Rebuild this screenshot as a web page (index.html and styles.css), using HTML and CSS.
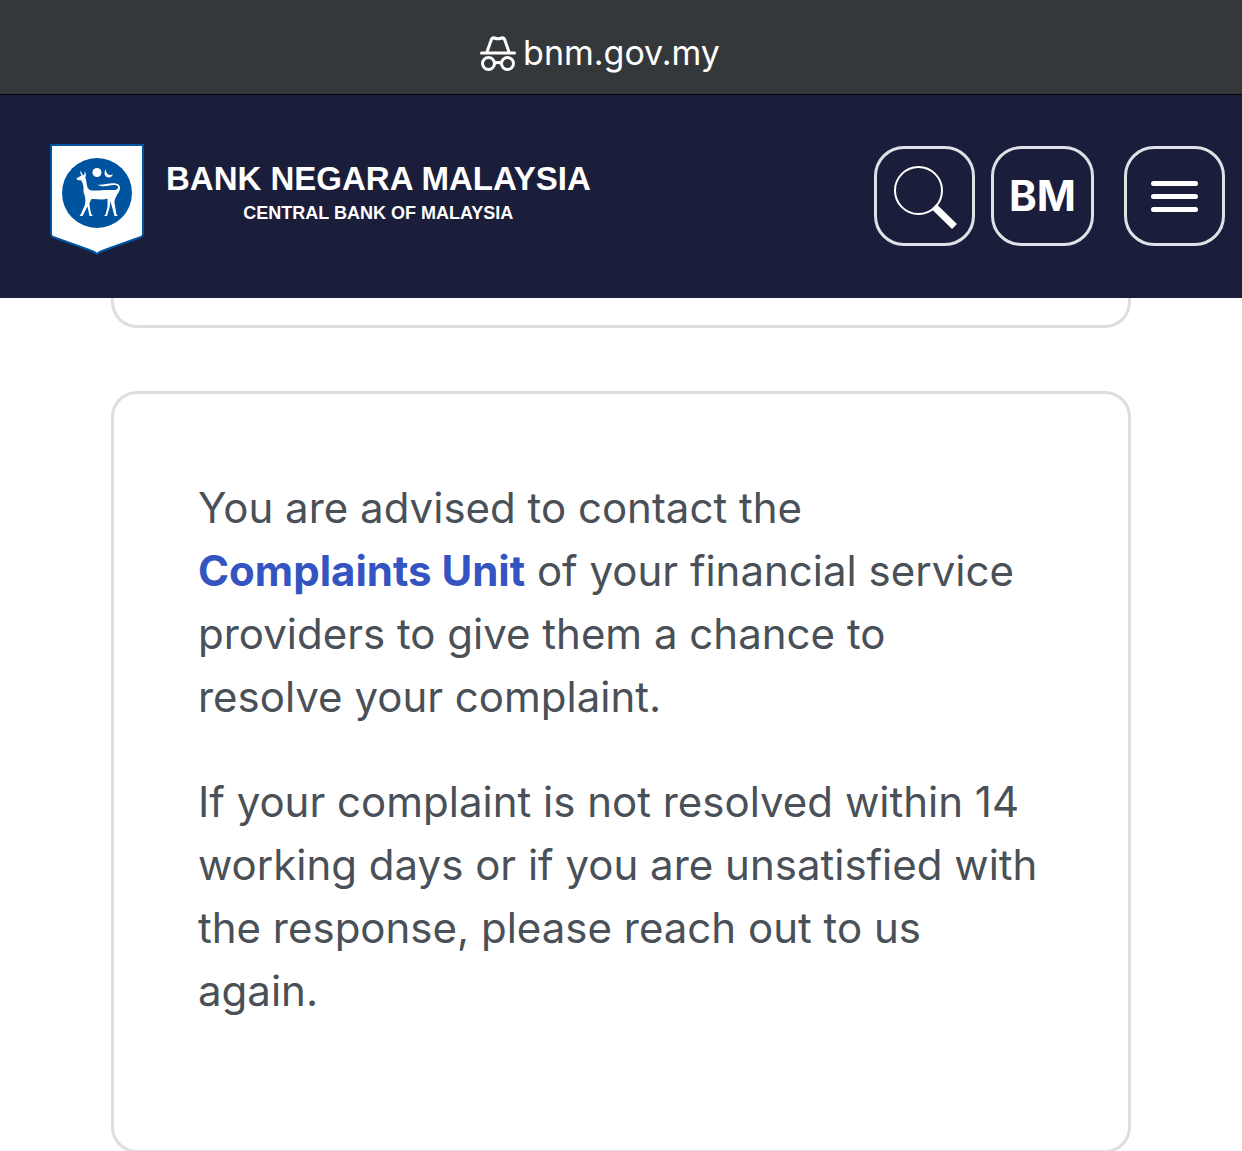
FILE: index.html
```html
<!DOCTYPE html>
<html lang="en">
<head>
  <meta charset="UTF-8">
  <meta name="viewport" content="width=device-width, initial-scale=1.0">
  <title>Bank Negara Malaysia</title>
  <link rel="stylesheet" href="styles.css">
</head>
<body>
  <div class="address-bar">
    <svg class="incognito" viewBox="0 0 36 36" aria-hidden="true">
      <path d="M7 17 11 5.500Q12 2.300 14.500 3Q18 4.500 21.500 3Q24 2.300 25 5.500L29 17M1.500 18H34.500" stroke-linecap="round"/>
      <circle cx="8.500" cy="28.500" r="6"/>
      <circle cx="27.500" cy="28.500" r="6"/>
      <path d="M14.500 28.500Q18 26.500 21.500 28.500"/>
    </svg>
    <span>bnm.gov.my</span>
  </div>

  <header class="header">
    <a href="#" class="brand">
      <svg class="crest" viewBox="0 0 96 114" aria-hidden="true">
        <path class="shield" d="M2 2H94V91Q94 93 92 94L57 106.500Q51 108.500 48 111Q45 108.500 39 106.500L4 94Q2 93 2 91Z"/>
        <circle class="disc" cx="48" cy="50" r="35"/>
        <circle class="white" cx="48" cy="29.500" r="4.500"/>
        <path class="white" d="M57 26C54 30 56 34.800 60 34.500C62 34.500 63.500 33 63.800 31.300C60.500 33.300 56.500 31 57 26Z"/>
        <path class="white" d="M32.500 32.500C31 30.500 31.200 29 31.700 27.500C32.500 30 33.500 31.500 34.500 32.500C35.500 31 36 30 35.500 28C37.500 30.500 37 32.500 36.300 34.500C37.500 37.500 37.500 41 38.500 44.500Q39.500 47 43 47.500C50 48 56 46.500 63 47Q68 47.500 69 45C69.500 42.500 67.500 41.700 64.500 42C59 42.700 54 44.500 48.500 41.700C54 42.300 58 40.500 64 40.300C69 40.200 71.500 42.500 71 45.500Q70.500 49 68.500 51C67 54 65 57 65.500 60L67.500 71.500 69 73H65.500L61.500 58.500 60.500 65 58 73H55L56.500 71.500 58.500 64 58.500 55.500C53 57.500 48 55.500 42.500 56L40.500 60C40.500 64 41.500 68 42.500 71.500L44 73H40.500L38.500 63.500 33.500 73H30.500L32 71 36 61.500C37 57 36 53 34.500 49C35 45 34 40.500 32.500 37.500L28.500 37 27.300 35.500Z"/>
      </svg>
      <span class="brand-text">
        <span class="brand-name">BANK NEGARA MALAYSIA</span>
        <span class="brand-sub">CENTRAL BANK OF MALAYSIA</span>
      </span>
    </a>

    <div class="actions">
      <button type="button" class="btn" aria-label="Search">
        <svg class="icon" viewBox="0 0 64 64" aria-hidden="true">
          <circle cx="25.500" cy="26.500" r="23.500" stroke-width="2"/>
          <path d="M41 42.500 61.500 62.500" stroke-width="7"/>
        </svg>
      </button>
      <button type="button" class="btn">BM</button>
      <button type="button" class="btn btn-menu" aria-label="Menu">
        <svg class="icon" viewBox="0 0 64 64" aria-hidden="true">
          <path d="M10.500 19.500H52.500M10.500 32.500H52.500M10.500 45.500H52.500" stroke-width="5" stroke-linecap="round"/>
        </svg>
      </button>
    </div>
  </header>

  <main class="content">
    <section class="card card-end"></section>
    <section class="card">
      <p>You are advised to contact the <a href="#">Complaints Unit</a> of your financial service providers to give them a chance to resolve your complaint.</p>
      <p>If your complaint is not resolved within 14 working days or if you are unsatisfied with the response, please reach out to us again.</p>
    </section>
  </main>
</body>
</html>
```

FILE: styles.css
```css
* {
  box-sizing: border-box;
}

body {
  margin: 0;
  height: 100vh;
  display: flex;
  flex-direction: column;
  overflow: hidden;
  background-color: #fff;
  font-family: Inter, sans-serif;
}

.address-bar {
  display: flex;
  flex-shrink: 0;
  justify-content: center;
  align-items: center;
  gap: 7px;
  padding: 31px 42px 19px 0;
  border-bottom: 1px solid #000;
  background-color: #35383b;
  color: #fff;
  font-size: 34px;
  line-height: 44px;
}

.incognito {
  width: 36px;
  height: 36px;
  fill: none;
  stroke: #fff;
  stroke-width: 3;
}

.header {
  display: flex;
  flex-shrink: 0;
  justify-content: space-between;
  align-items: center;
  padding: 48px 17px 41px 49px;
  background-color: #1b1e3b;
}

.brand {
  display: flex;
  gap: 21px;
  color: #fff;
  text-decoration: none;
  font-family: "Liberation Sans", Arial, sans-serif;
  font-weight: bold;
}

.crest {
  width: 96px;
  height: 114px;
}

.shield {
  fill: #fff;
  stroke: #00549f;
  stroke-width: 2;
}

.disc {
  fill: #00549f;
}

.white {
  fill: #fff;
}

.brand-text {
  display: flex;
  flex-direction: column;
  align-items: center;
  padding-top: 16px;
}

.brand-name {
  font-size: 33px;
  line-height: 40px;
}

.brand-sub {
  font-size: 18px;
  line-height: 28px;
}

.actions {
  display: flex;
  gap: 16px;
  padding-bottom: 8px;
}

.btn {
  display: flex;
  justify-content: center;
  align-items: center;
  min-width: 101px;
  height: 100px;
  padding: 0 15px;
  border: 3px solid #dee2e6;
  border-radius: 30px;
  background: none;
  color: #fff;
  font-family: inherit;
  font-size: 42px;
  font-weight: 700;
  line-height: 52px;
  cursor: pointer;
}

.btn-menu {
  margin-left: 14px;
}

.icon {
  width: 64px;
  height: 64px;
  overflow: visible;
  fill: none;
  stroke: #fff;
}

.content {
  flex: 1;
  overflow: hidden;
  padding: 0 111px;
}

.card {
  padding: 82px 88px 44px 84px;
  border: 3px solid #dedede;
  border-radius: 26px;
  color: #495057;
  font-size: 42px;
  line-height: 63px;
}

.card-end {
  height: 30px;
  margin-bottom: 63px;
  padding: 0;
  border-top: none;
  border-radius: 0 0 26px 26px;
}

.card p {
  margin: 0 0 42px;
}

.card p:last-child {
  margin-bottom: 84px;
}

.card a {
  color: #3454c1;
  font-weight: 700;
  text-decoration: none;
}
```
